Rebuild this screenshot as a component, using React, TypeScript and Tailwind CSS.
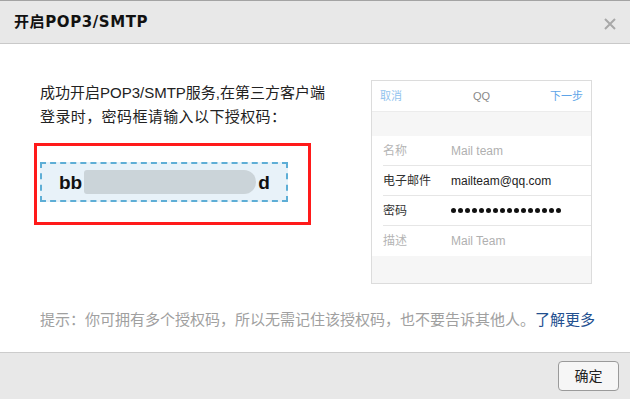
import React from "react";

const cjk = '"Liberation Sans", "Noto Sans CJK SC", sans-serif';

function Dots() {
  const arr = Array.from({ length: 16 });
  return (
    <div className="flex gap-[2px] items-center">
      {arr.map((_, i) => (
        <span key={i} className="block w-[5px] h-[5px] rounded-full bg-[#111]" />
      ))}
    </div>
  );
}

function Row({ label, value, strong, last }: { label: string; value: React.ReactNode; strong?: boolean; last?: boolean }) {
  return (
    <div className="pl-[11px] bg-white">
      <div className={`flex items-center h-[30px] ${last ? "" : "border-b border-[#e6e6e6]"}`}>
        <span className={`w-[68px] text-[12px] ${strong ? "text-[#333]" : "text-[#b5b5b5]"}`}>{label}</span>
        <span className={`text-[12px] ${strong ? "text-[#222]" : "text-[#b0b0b0]"}`}>{value}</span>
      </div>
    </div>
  );
}

export default function App() {
  return (
    <div className="w-[630px] h-[399px] bg-white flex flex-col overflow-hidden" style={{ fontFamily: cjk }}>
      {/* Header */}
      <div className="h-[44px] bg-[#e8e8e8] border-t border-t-[#a3a3a3] border-b border-b-[#c9c9c9] flex items-center justify-between pl-[14px] pr-[13px] shrink-0">
        <span className="text-[15px] font-bold text-[#111] tracking-[0.6px]" style={{ fontFamily: '"DejaVu Sans", "Noto Sans CJK SC", sans-serif' }}>开启POP3/SMTP</span>
        <svg width="14" height="14" viewBox="0 0 14 14" className="mt-[4px]">
          <path d="M2 2 L12 12 M12 2 L2 12" stroke="#a8a8a8" strokeWidth="2" />
        </svg>
      </div>

      {/* Body */}
      <div className="flex-1 flex flex-col pt-[36px] pl-[34px]">
        <div className="flex">
          <div className="w-[277px] flex flex-col">
            <div className="pl-[6px] mt-[1px] text-[15px] leading-[24px] text-[#222] whitespace-nowrap">
              <div>成功开启POP3/SMTP服务,在第三方客户端</div>
              <div className="tracking-[0.4px]">登录时，密码框请输入以下授权码：</div>
            </div>
            <div className="mt-[14px] h-[82px] border-[3px] border-[#ff1a1a] pt-[16px] pl-[3px]">
              <div className="w-[248px] h-[40px] border-2 border-dashed border-[#5eaed6] bg-[#e8f2f9] flex items-center pl-[17px]">
                <span className="text-[19px] font-bold text-[#111] leading-none" style={{ fontFamily: '"Liberation Sans", sans-serif' }}>bb</span>
                <span className="block ml-[2px] w-[172px] h-[24px] bg-[#cbd4d9] rounded-r-[12px] rounded-l-[3px]" />
                <span className="text-[19px] font-bold text-[#111] leading-none ml-[2px]" style={{ fontFamily: '"Liberation Sans", sans-serif' }}>d</span>
              </div>
            </div>
          </div>

          {/* Phone picture */}
          <div className="ml-[60px] w-[221px] h-[204px] border border-[#dcdcdc] flex flex-col bg-[#f6f6f6]">
            <div className="h-[31px] bg-white border-b border-[#ececec] grid grid-cols-3 items-center px-[8px] text-[11px]">
              <span className="text-[#93c3ee]">取消</span>
              <span className="text-[#8a8a8a] text-center">QQ</span>
              <span className="text-[#5ea4e8] text-right">下一步</span>
            </div>
            <div className="h-[24px]" />
            <Row label="名称" value="Mail team" />
            <Row label="电子邮件" value="mailteam@qq.com" strong />
            <Row label="密码" value={<Dots />} strong />
            <Row label="描述" value="Mail Team" last />
          </div>
        </div>

        <div className="mt-[24px] pl-[6px] text-[15px] leading-[24px] text-[#a0a0a0] whitespace-nowrap">
          提示：你可拥有多个授权码，所以无需记住该授权码，也不要告诉其他人。<span className="text-[#23508f]">了解更多</span>
        </div>
      </div>

      {/* Footer */}
      <div className="h-[47px] bg-[#e8e8e8] border-t border-[#cccccc] flex items-center justify-end pr-[11px] shrink-0">
        <button className="w-[61px] h-[30px] rounded-[4px] border border-[#9a9a9a] bg-[#f6f6f6] text-[14px] text-[#222]">确定</button>
      </div>
    </div>
  );
}
